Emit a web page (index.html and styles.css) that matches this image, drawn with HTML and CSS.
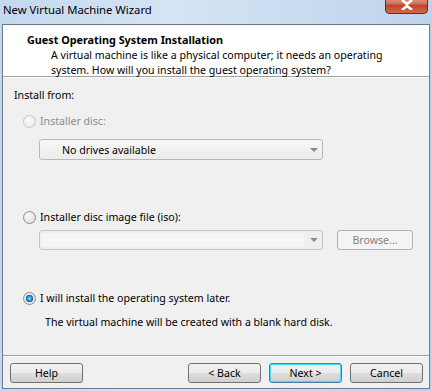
FILE: index.html
```html
<!DOCTYPE html>
<html lang="en">
  <head>
    <meta charset="utf-8" />
    <title>New Virtual Machine Wizard</title>
    <link rel="stylesheet" href="styles.css">
  </head>
  <body>
    <div class="window">
      <div class="titlebar">
        <span class="title">New Virtual Machine Wizard</span>
        <span class="close-btn">
          <svg width="14" height="10" viewBox="0 0 14 10"><path d="M2 0 L7 4 L12 0 M2 10 L7 6 L12 10" stroke="#fff" stroke-width="2.6" fill="none"/></svg>
        </span>
      </div>
      <div class="client">
        <header class="wiz-header">
          <h1 class="wiz-title">Guest Operating System Installation</h1>
          <p class="wiz-desc">A virtual machine is like a physical computer; it needs an operating system. How will you install the guest operating system?</p>
        </header>
        <main class="wiz-body">
          <div class="label">Install from:</div>

          <div class="option disabled">
            <span class="radio"></span>
            <span>Installer disc:</span>
          </div>
          <div class="field-row">
            <div class="combo">
              <span class="combo-text">No drives available</span>
              <span class="arrow"></span>
            </div>
          </div>

          <div class="option opt-iso">
            <span class="radio"></span>
            <span>Installer disc image file (iso):</span>
          </div>
          <div class="field-row row-iso">
            <div class="combo combo-edit">
              <span class="combo-input"></span>
              <span class="arrow"></span>
            </div>
            <button class="btn btn-disabled browse">Browse...</button>
          </div>

          <div class="option opt-later">
            <span class="radio checked"></span>
            <span>I will install the operating system later.</span>
          </div>
          <p class="note">The virtual machine will be created with a blank hard disk.</p>
        </main>
        <footer class="wiz-footer">
          <button class="btn">Help</button>
          <div class="nav">
            <button class="btn">&lt; Back</button>
            <button class="btn btn-default">Next &gt;</button>
            <button class="btn">Cancel</button>
          </div>
        </footer>
      </div>
    </div>
  </body>
</html>
```

FILE: styles.css
```css
body {
  margin: 0;
  font-family: "Noto Sans", "Open Sans", sans-serif;
  font-size: 10.6px;
  color: #000;
  background: #b9d1ea;
}

.window {
  width: 432px;
  height: 391px;
  overflow: hidden;
  background: linear-gradient(90deg, #c4d8ee 0%, #d5e4f5 40%, #c9dcf0 70%, #bdd3ea 100%);
}

.titlebar {
  height: 24px;
  display: flex;
  justify-content: space-between;
  align-items: flex-start;
}

.title {
  padding: 2px 0 0 3px;
  font-size: 11.3px;
  line-height: 16px;
  color: #000;
}

.close-btn {
  width: 43px;
  height: 19px;
  margin: -5px 4px 0 0;
  border: 1px solid #6b2b20;
  border-radius: 0 0 4px 4px;
  background: linear-gradient(#e4a593 0%, #d2735c 45%, #c0432a 55%, #d06a4c 100%);
  display: flex;
  align-items: flex-end;
  justify-content: center;
  padding-bottom: 3px;
  box-sizing: border-box;
}

.client {
  margin: 0 2px;
  height: 363px;
  border: 1px solid #6c7b8c;
  background: #f0f0f0;
  display: flex;
  flex-direction: column;
}

.wiz-header {
  background: #fff;
  height: 52px;
  border-bottom: 1px solid #a0a0a0;
  box-shadow: 0 1px 0 #fff;
  padding: 7px 0 0 24px;
  box-sizing: border-box;
}

.wiz-title {
  margin: 0;
  font-size: 10.8px;
  font-weight: bold;
  line-height: 16px;
}

.wiz-desc {
  margin: 0 0 0 24px;
  width: 350px;
  line-height: 15px;
}

.wiz-body {
  flex: 1;
  padding: 10px 0 0 11px;
}

.label {
  line-height: 16px;
}

.option {
  display: flex;
  align-items: center;
  gap: 4px;
  margin-left: 9px;
  line-height: 16px;
}

.option.disabled {
  margin-top: 10px;
  color: #8d8d8d;
}

.opt-iso {
  margin-top: 49px;
}

.opt-later {
  margin-top: 40px;
}

.radio {
  width: 11px;
  height: 11px;
  border: 1px solid #8f8f8f;
  border-radius: 50%;
  background: radial-gradient(circle at 40% 35%, #fcfcfc 0%, #e6e6e6 60%, #d2d2d2 100%);
  box-sizing: content-box;
}

.disabled .radio {
  border-color: #c6c6c6;
  background: radial-gradient(circle at 40% 35%, #fafafa 0%, #ececec 70%);
}

.radio.checked {
  background: radial-gradient(circle, #8de3ff 0%, #2a8ec7 30%, #1a5e8e 44%, #e9e9e9 50%, #dcdcdc 100%);
}

.field-row {
  display: flex;
  gap: 14px;
  margin: 10px 0 0 25px;
}

.row-iso {
  margin-top: 5px;
}

.combo {
  width: 284px;
  height: 21px;
  border: 1px solid #b9b9b9;
  border-radius: 3px;
  background: linear-gradient(#f7f7f7, #ececec);
  display: flex;
  align-items: center;
  justify-content: space-between;
  box-sizing: border-box;
}

.combo-text {
  padding-left: 22px;
}

.combo-edit {
  background: #efefef;
  border-color: #c5c5c5;
  height: 20px;
}

.combo-input {
  width: 262px;
  height: 14px;
  margin-left: 2px;
  background: #f5f5f5;
}

.arrow {
  width: 0;
  height: 0;
  margin-right: 4px;
  border-left: 4px solid transparent;
  border-right: 4px solid transparent;
  border-top: 4px solid #8a8a8a;
}

.btn {
  width: 73px;
  height: 20px;
  border: 1px solid #707070;
  border-radius: 3px;
  background: linear-gradient(#f2f2f2 0%, #ebebeb 48%, #dddddd 52%, #cfcfcf 100%);
  font-family: inherit;
  font-size: 10.6px;
  line-height: 16px;
  padding: 0;
  color: #000;
}

.btn-disabled {
  border-color: #adb2b5;
  background: #f4f4f4;
  color: #838383;
  width: 76px;
}

.btn-default {
  border-color: #3c7fb1;
  box-shadow: inset 0 0 0 1px #48d8fb;
}

.note {
  margin: 8px 0 0 31px;
  line-height: 16px;
}

.wiz-footer {
  height: 33px;
  border-top: 1px solid #a0a0a0;
  box-shadow: inset 0 1px 0 #fff;
  display: flex;
  justify-content: space-between;
  align-items: flex-start;
  padding: 7px 6px 0 7px;
  box-sizing: border-box;
}

.nav {
  display: flex;
  gap: 8px;
}
```
